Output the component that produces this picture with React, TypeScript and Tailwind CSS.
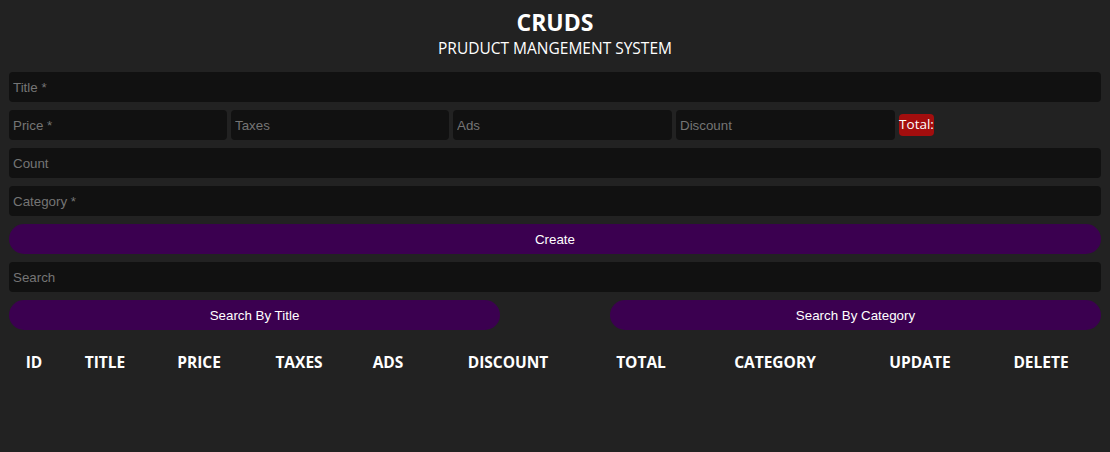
import React from "react";

const inputCls =
  "h-[30px] bg-[#111111] rounded-[4px] px-[4px] text-[13.33px] text-white placeholder:text-[#757575] outline-none border-0 font-['Liberation_Sans',Arial,sans-serif]";

const btnCls =
  "h-[30px] rounded-[20px] bg-[#3b0050] pt-[2px] text-[13.33px] text-white font-['Liberation_Sans',Arial,sans-serif]";

const cols: [string, number][] = [
  ["ID", 50],
  ["TITLE", 92],
  ["PRICE", 96],
  ["TAXES", 104],
  ["ADS", 74],
  ["DISCOUNT", 166],
  ["TOTAL", 100],
  ["CATEGORY", 168],
  ["UPDATE", 122],
  ["DELETE", 120],
];

export default function App() {
  return (
    <div className="min-h-[452px] w-full bg-[#222222] text-white">
      <div className="px-[9px]">
        <div className="flex flex-col items-center pt-[8px] font-['Open_Sans','Noto_Sans',sans-serif]">
          <div className="text-[23px] font-bold leading-[28px]">CRUDS</div>
          <div className="text-[15.5px] leading-[24px]">PRUDUCT MANGEMENT SYSTEM</div>
        </div>
        <div className="mt-[12px] flex flex-col gap-[8px]">
          <input className={inputCls + " w-full"} placeholder="Title *" />
          <div className="flex items-center gap-[4px]">
            <input className={inputCls + " w-[218px]"} placeholder="Price *" />
            <input className={inputCls + " w-[218px]"} placeholder="Taxes" />
            <input className={inputCls + " w-[219px]"} placeholder="Ads" />
            <input className={inputCls + " w-[219px]"} placeholder="Discount" />
            <span className="h-[22px] w-[35px] flex items-center justify-center rounded-[4px] bg-[#a30e0e] text-[13.5px] font-['Open_Sans','Noto_Sans',sans-serif] leading-none">
              Total:
            </span>
          </div>
          <input className={inputCls + " w-full"} placeholder="Count" />
          <input className={inputCls + " w-full"} placeholder="Category *" />
          <button className={btnCls + " w-full"}>Create</button>
          <input className={inputCls + " w-full"} placeholder="Search" />
          <div className="flex justify-between">
            <button className={btnCls + " w-[491px]"}>Search By Title</button>
            <button className={btnCls + " w-[491px]"}>Search By Category</button>
          </div>
        </div>
        <div className="mt-[11px] flex h-[44px] items-center font-['Open_Sans','Noto_Sans',sans-serif] text-[15.5px] font-bold">
          {cols.map(([name, w]) => (
            <div key={name} className="text-center" style={{ width: w }}>
              {name}
            </div>
          ))}
        </div>
      </div>
    </div>
  );
}
